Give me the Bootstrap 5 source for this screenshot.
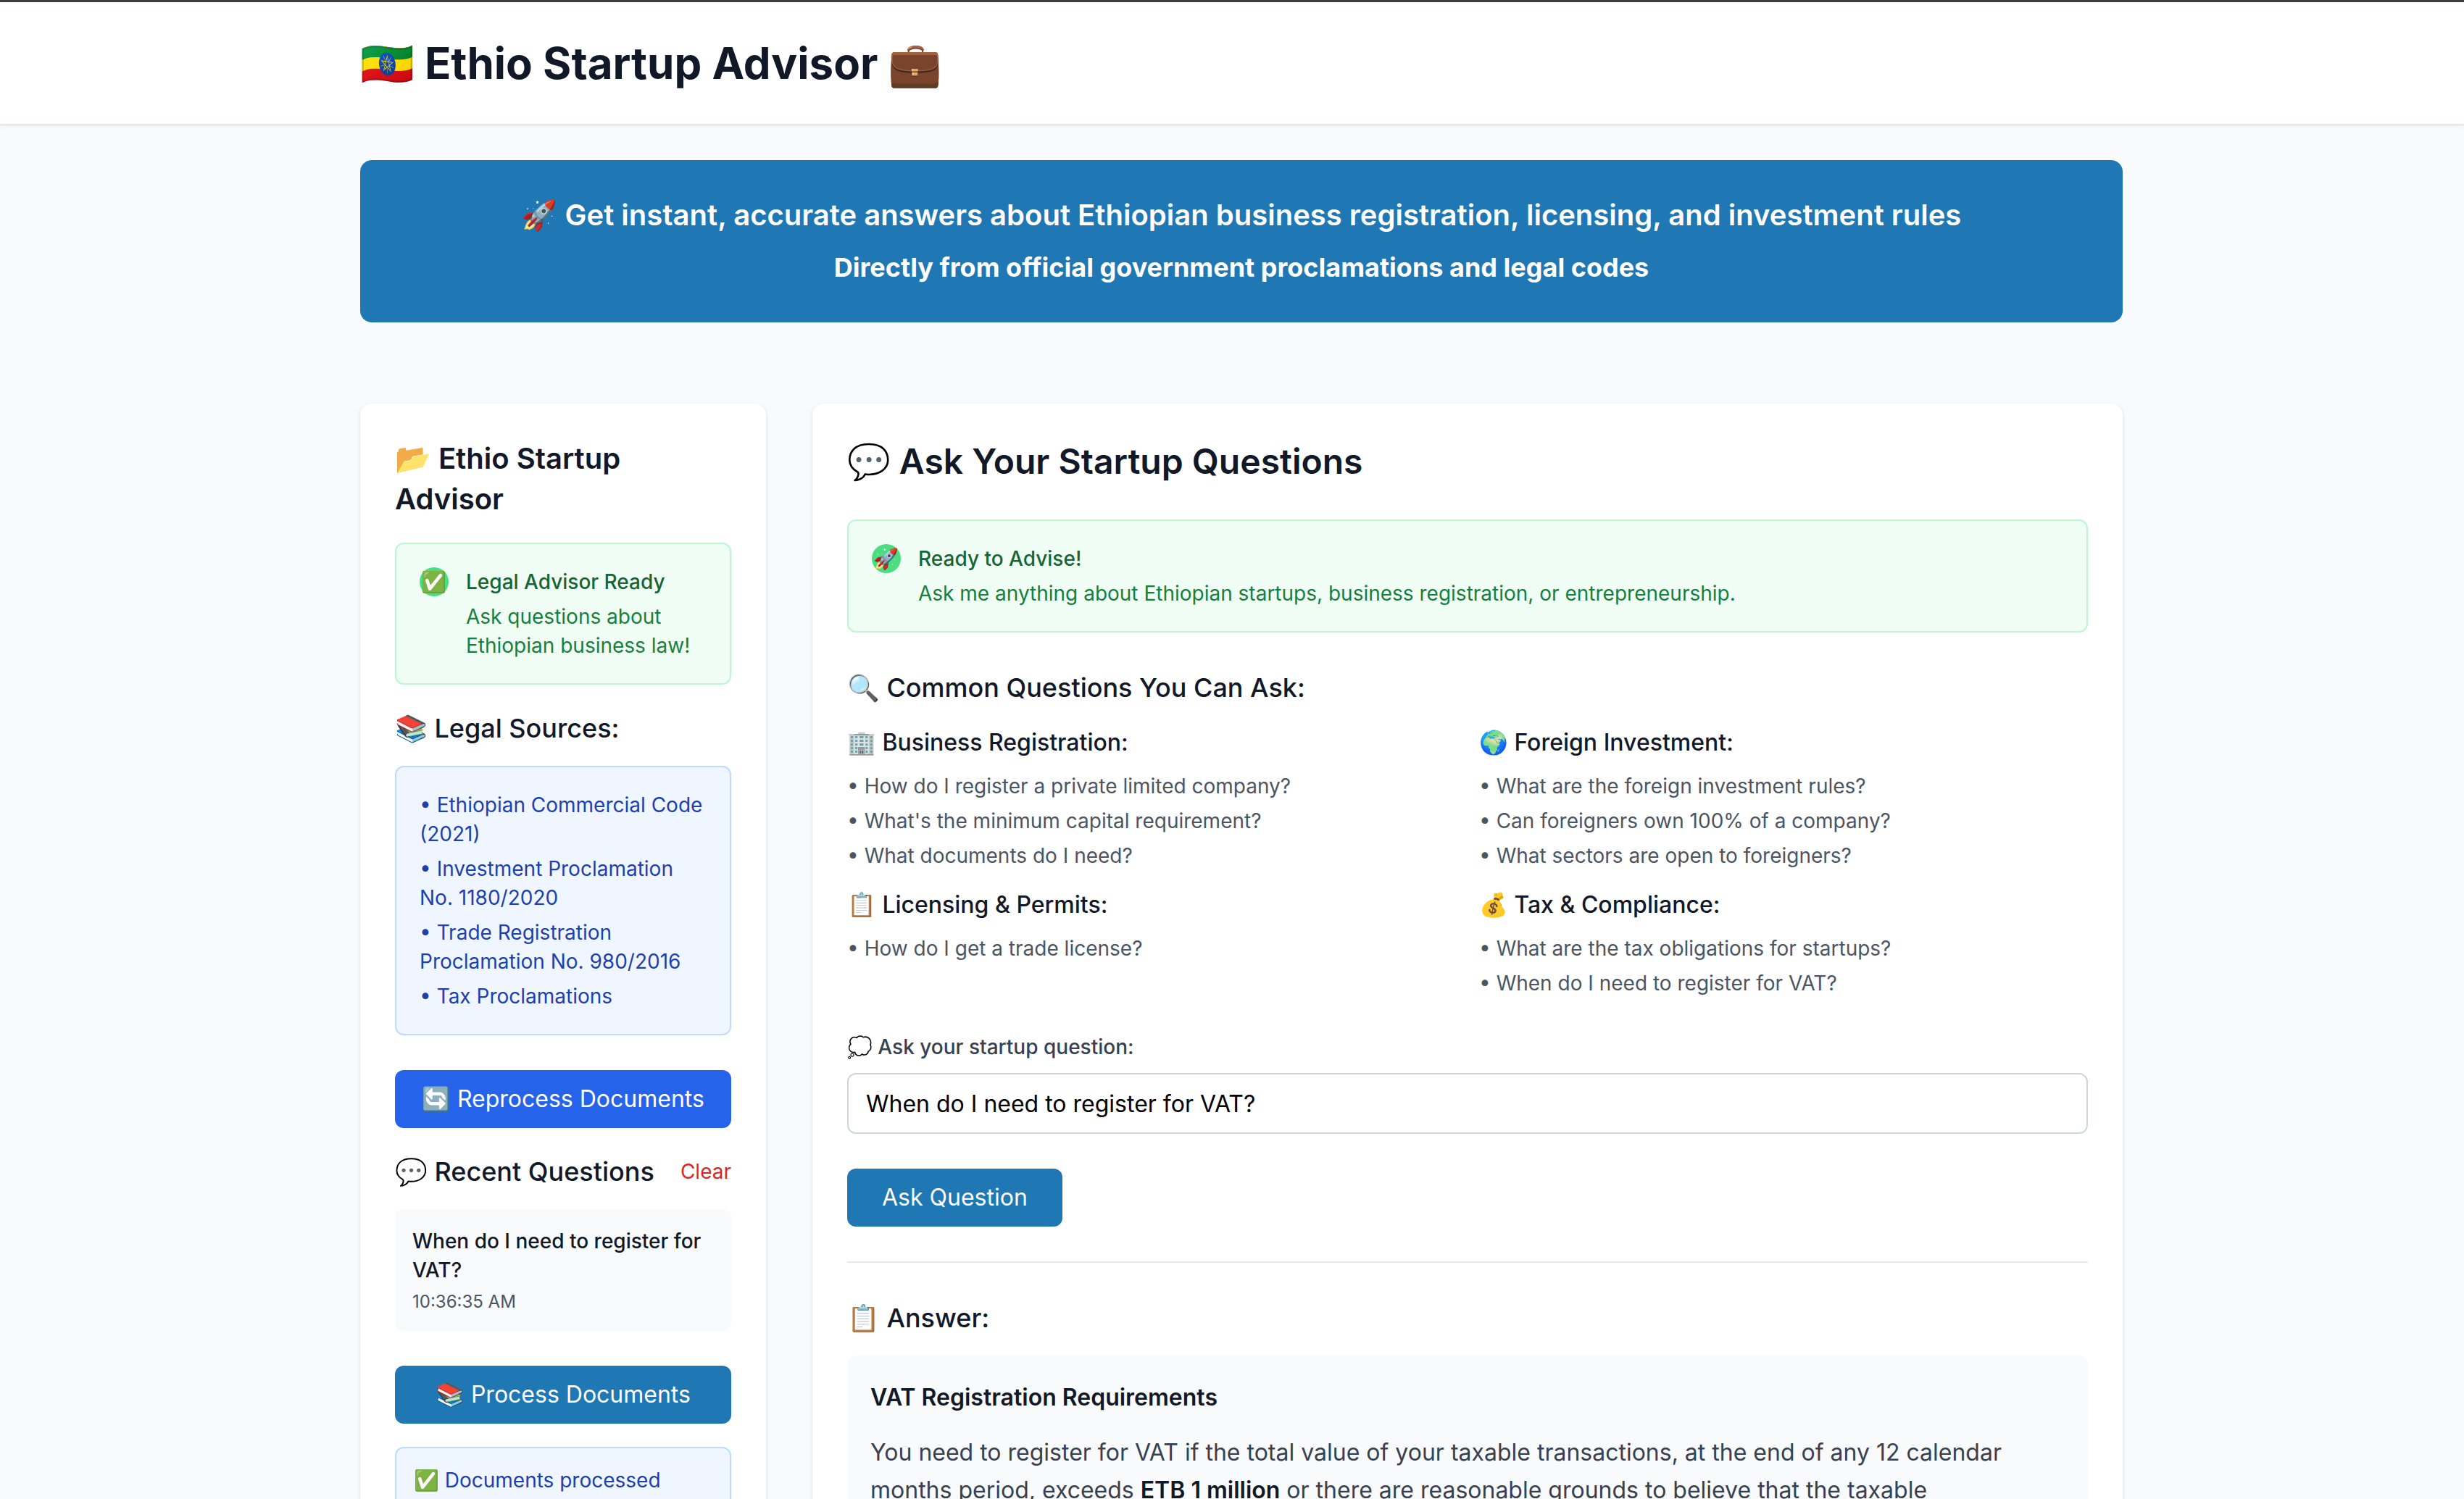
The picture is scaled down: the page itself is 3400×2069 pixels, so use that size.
<!DOCTYPE html>
<html lang="en">
<head>
<meta charset="utf-8">
<meta name="viewport" content="width=device-width, initial-scale=1">
<title>Ethio Startup Advisor</title>
<link href="https://cdn.jsdelivr.net/npm/bootstrap@5.3.0/dist/css/bootstrap.min.css" rel="stylesheet">
<style>
  :root { --brand: #1f77b4; --ink: #111827; --line: #e5e7eb; --surface: #f9fafb; }
  body { font-family: Inter, "Noto Color Emoji", sans-serif; font-size: 32px; line-height: 48px; color: var(--ink); background: var(--surface); }
  h1, h2, h3, h4, p, ul { margin: 0; }
  .top-strip { height: 3px; background: #403c3e; }
  .site-header { background: #fff; border-bottom: 2px solid var(--line); box-shadow: 0 2px 4px rgba(0,0,0,.05); }
  .page-gutter { padding-left: 26px; }
  .page-wrap { max-width: 2560px; margin: 0 auto; padding: 48px 64px; }
  .site-title { font-size: 60px; line-height: 72px; font-weight: 700; }
  .hero { background: var(--brand); color: #fff; border-radius: 16px; padding: 48px; margin-bottom: 112px; }
  .hero-title { font-size: 40px; line-height: 56px; font-weight: 600; }
  .hero-sub { font-size: 36px; line-height: 56px; font-weight: 700; margin-top: 16px; }
  .layout { display: grid; grid-template-columns: repeat(4, minmax(0, 1fr)); gap: 64px; }
  .layout-main { grid-column: span 3; }
  .panel { background: #fff; border-radius: 16px; padding: 48px; box-shadow: 0 2px 6px rgba(0,0,0,.1), 0 2px 4px -2px rgba(0,0,0,.1); }
  .panel-title { font-size: 48px; line-height: 64px; font-weight: 600; margin-bottom: 48px; }
  .side-title { font-size: 40px; line-height: 56px; font-weight: 600; margin-bottom: 32px; }
  .section-title { font-size: 36px; line-height: 56px; font-weight: 500; }
  .group-title { font-size: 32px; line-height: 48px; font-weight: 500; margin-bottom: 16px; }
  .text-s { font-size: 28px; line-height: 40px; }
  .text-xs { font-size: 24px; line-height: 32px; }
  .note { border: 2px solid; border-radius: 12px; padding: 32px; }
  .note-green { background: #f0fdf4; border-color: #bbf7d0; color: #15803d; }
  .note-green h3 { font-size: 28px; line-height: 40px; font-weight: 500; color: #166534; margin-bottom: 8px; }
  .note-blue { background: #eff6ff; border-color: #bfdbfe; color: #1e40af; }
  .note-short { padding: 24px; min-height: 132px; }
  .dot-icon { width: 40px; height: 40px; border-radius: 50%; background: #4ade80; font-size: 28px; line-height: 40px; flex: none; }
  .gap-24 { gap: 24px; }
  .stack-8 { display: flex; flex-direction: column; gap: 8px; }
  .btn-fill { font-size: 32px; line-height: 48px; padding: 16px 48px; border: 0; border-radius: 12px; color: #fff; background: var(--brand); }
  .btn-full { padding: 16px 32px; width: 100%; }
  .btn-blue { background: #2563eb; }
  .btn-clear { font-size: 28px; line-height: 40px; color: #dc2626; padding: 0; border: 0; }
  .mt-32 { margin-top: 32px; } .mt-48 { margin-top: 48px; } .mt-24 { margin-top: 24px; }
  .history-item { background: var(--surface); border-radius: 12px; padding: 24px; }
  .history-item p { font-weight: 500; }
  .history-item time { color: #4b5563; display: block; margin-top: 8px; }
  .topics { display: grid; grid-template-columns: repeat(2, minmax(0, 1fr)); gap: 24px 32px; margin-top: 24px; }
  .topics ul { color: #4b5563; }
  .ask-label { font-weight: 500; color: #374151; margin: 0 0 16px; display: block; }
  .ask-input { font-size: 32px; line-height: 48px; height: 84px; padding: 16px 24px; border: 2px solid #d1d5db; border-radius: 12px; color: #000; background: #fff; }
  .answer-area { border-top: 2px solid var(--line); padding-top: 48px; }
  .answer-box { background: var(--surface); border-radius: 12px; padding: 32px; color: #374151; line-height: 52px; }
  .answer-box h4 { font-size: 32px; line-height: 52px; font-weight: 600; color: var(--ink); margin-bottom: 24px; }
  .answer-box strong { font-weight: 600; color: var(--ink); }
</style>
<script src="https://cdn.jsdelivr.net/npm/bootstrap@5.3.0/dist/js/bootstrap.bundle.min.js"></script>
</head>
<body class="vh-100 overflow-hidden">
<div class="top-strip"></div>
<header class="site-header page-gutter">
  <div class="page-wrap"><h1 class="site-title">🇪🇹 Ethio Startup Advisor 💼</h1></div>
</header>

<main class="page-gutter">
  <div class="page-wrap">
    <section class="hero text-center">
      <h2 class="hero-title">🚀 Get instant, accurate answers about Ethiopian business registration, licensing, and investment rules</h2>
      <p class="hero-sub">Directly from official government proclamations and legal codes</p>
    </section>

    <div class="layout">
      <aside class="panel">
        <h2 class="side-title">📂 Ethio Startup Advisor</h2>
        <div class="note note-green d-flex gap-24">
          <span class="dot-icon d-flex justify-content-center align-items-center">✅</span>
          <div>
            <h3>Legal Advisor Ready</h3>
            <p class="text-s">Ask questions about Ethiopian business law!</p>
          </div>
        </div>

        <h3 class="section-title mt-32">📚 Legal Sources:</h3>
        <ul class="note note-blue text-s list-unstyled stack-8 mt-24">
          <li>• Ethiopian Commercial Code (2021)</li>
          <li>• Investment Proclamation No. 1180/2020</li>
          <li>• Trade Registration Proclamation No. 980/2016</li>
          <li>• Tax Proclamations</li>
        </ul>

        <button type="button" class="btn btn-fill btn-full btn-blue mt-48">🔄 Reprocess Documents</button>

        <div class="d-flex justify-content-between align-items-center mt-32">
          <h3 class="section-title">💬 Recent Questions</h3>
          <button type="button" class="btn btn-clear">Clear</button>
        </div>
        <div class="history-item mt-24">
          <p class="text-s">When do I need to register for VAT?</p>
          <time class="text-xs">10:36:35 AM</time>
        </div>

        <button type="button" class="btn btn-fill btn-full mt-48">📚 Process Documents</button>
        <div class="note note-blue note-short text-s mt-32">✅ Documents processed</div>
      </aside>

      <section class="panel layout-main">
        <h2 class="panel-title">💬 Ask Your Startup Questions</h2>
        <div class="note note-green d-flex gap-24">
          <span class="dot-icon d-flex justify-content-center align-items-center">🚀</span>
          <div>
            <h3>Ready to Advise!</h3>
            <p class="text-s">Ask me anything about Ethiopian startups, business registration, or entrepreneurship.</p>
          </div>
        </div>

        <h3 class="section-title mt-48">🔍 Common Questions You Can Ask:</h3>
        <div class="topics">
          <div>
            <h4 class="group-title">🏢 Business Registration:</h4>
            <ul class="list-unstyled text-s stack-8">
              <li>• How do I register a private limited company?</li>
              <li>• What's the minimum capital requirement?</li>
              <li>• What documents do I need?</li>
            </ul>
          </div>
          <div>
            <h4 class="group-title">🌍 Foreign Investment:</h4>
            <ul class="list-unstyled text-s stack-8">
              <li>• What are the foreign investment rules?</li>
              <li>• Can foreigners own 100% of a company?</li>
              <li>• What sectors are open to foreigners?</li>
            </ul>
          </div>
          <div>
            <h4 class="group-title">📋 Licensing &amp; Permits:</h4>
            <ul class="list-unstyled text-s stack-8">
              <li>• How do I get a trade license?</li>
            </ul>
          </div>
          <div>
            <h4 class="group-title">💰 Tax &amp; Compliance:</h4>
            <ul class="list-unstyled text-s stack-8">
              <li>• What are the tax obligations for startups?</li>
              <li>• When do I need to register for VAT?</li>
            </ul>
          </div>
        </div>

        <form class="mt-48" onsubmit="return false">
          <label for="question" class="ask-label text-s">💭 Ask your startup question:</label>
          <input id="question" type="text" class="form-control ask-input" value="When do I need to register for VAT?">
          <button type="submit" class="btn btn-fill mt-48">Ask Question</button>
        </form>

        <div class="answer-area mt-48">
          <h3 class="section-title">📋 Answer:</h3>
          <div class="answer-box mt-24">
            <h4>VAT Registration Requirements</h4>
            <p>You need to register for VAT if the total value of your taxable transactions, at the end of any 12 calendar months period, exceeds <strong>ETB 1 million</strong> or there are reasonable grounds to believe that the taxable</p>
          </div>
        </div>
      </section>
    </div>
  </div>
</main>
</body>
</html>
